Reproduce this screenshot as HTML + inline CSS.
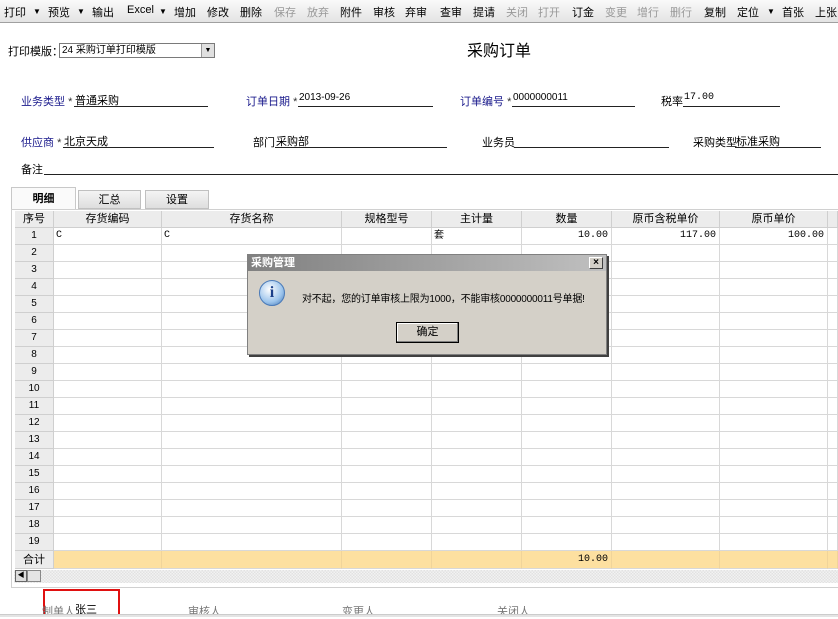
<!DOCTYPE html>
<html><head><meta charset="utf-8"><style>
*{margin:0;padding:0;box-sizing:border-box}
body{width:838px;height:617px;overflow:hidden;background:#fff;font-family:"Liberation Sans","Noto Sans CJK SC","WenQuanYi Zen Hei",sans-serif;font-size:11px;color:#000;position:relative}
.a{position:absolute;white-space:nowrap}
#tb{position:absolute;left:0;top:0;width:838px;height:23px;background:linear-gradient(#fafafa,#e4e4e4);border-bottom:1px solid #a0a0a0}
#tb span{position:absolute;top:4px;font-size:11px}
#tb .d{color:#999}
.lbl{color:#1a1a8c}
.ln{position:absolute;height:1px;background:#222}
.cell{position:absolute;border-right:1px solid #d8d8d8;border-bottom:1px solid #d8d8d8;height:17px;line-height:16px;font-size:10px;font-family:"Liberation Mono","Noto Sans CJK SC",monospace}
.hd{background:#ececec;border-right:1px solid #cfcfcf;border-bottom:1px solid #cfcfcf;text-align:center;font-family:"Liberation Sans","Noto Sans CJK SC",sans-serif;font-size:11px;font-weight:normal}
</style></head><body>
<div id="tb">
<span style="left:4px">打印</span><span style="left:33px;font-size:8px;top:7px">▼</span>
<span style="left:48px">预览</span><span style="left:77px;font-size:8px;top:7px">▼</span>
<span style="left:92px">输出</span>
<span style="left:127px">Excel</span><span style="left:159px;font-size:8px;top:7px">▼</span>
<span style="left:174px">增加</span><span style="left:207px">修改</span><span style="left:240px">删除</span>
<span style="left:274px" class="d">保存</span><span style="left:307px" class="d">放弃</span>
<span style="left:340px">附件</span><span style="left:373px">审核</span><span style="left:405px">弃审</span>
<span style="left:440px">查审</span><span style="left:473px">提请</span>
<span style="left:506px" class="d">关闭</span><span style="left:538px" class="d">打开</span>
<span style="left:572px">订金</span>
<span style="left:605px" class="d">变更</span><span style="left:637px" class="d">增行</span><span style="left:670px" class="d">删行</span>
<span style="left:704px">复制</span><span style="left:737px">定位</span><span style="left:767px;font-size:8px;top:7px">▼</span>
<span style="left:782px">首张</span><span style="left:815px">上张</span>
</div>
<div class="a" style="left:8px;top:43px">打印模版：</div>
<div class="a" style="left:59px;top:43px;width:156px;height:15px;border:1px solid #7a7a7a;font-size:10px;line-height:13px;padding-left:2px">24 采购订单打印模版
<div style="position:absolute;right:0;top:0;width:13px;height:13px;background:#e0e0e0;border-left:1px solid #999;font-size:7px;text-align:center;line-height:13px">▼</div></div>
<div class="a" style="left:467px;top:37px;font-size:16px">采购订单</div>

<div class="a lbl" style="left:21px;top:93px">业务类型 <span style="color:#333">*</span></div>
<div class="a" style="left:75px;top:92px">普通采购</div><div class="ln" style="left:74px;top:106px;width:134px"></div>
<div class="a lbl" style="left:246px;top:93px">订单日期 <span style="color:#333">*</span></div>
<div class="a" style="left:299px;top:92px;font-size:10px">2013-09-26</div><div class="ln" style="left:298px;top:106px;width:135px"></div>
<div class="a lbl" style="left:460px;top:93px">订单编号 <span style="color:#333">*</span></div>
<div class="a" style="left:513px;top:92px;font-size:10px">0000000011</div><div class="ln" style="left:512px;top:106px;width:123px"></div>
<div class="a" style="left:661px;top:93px">税率</div>
<div class="a" style="left:684px;top:92px;font-size:10px;font-family:'Liberation Mono',monospace">17.00</div><div class="ln" style="left:683px;top:106px;width:97px"></div>

<div class="a lbl" style="left:21px;top:134px">供应商 <span style="color:#333">*</span></div>
<div class="a" style="left:64px;top:133px">北京天成</div><div class="ln" style="left:63px;top:147px;width:151px"></div>
<div class="a" style="left:253px;top:134px">部门</div>
<div class="a" style="left:276px;top:133px">采购部</div><div class="ln" style="left:275px;top:147px;width:172px"></div>
<div class="a" style="left:482px;top:134px">业务员</div><div class="ln" style="left:514px;top:147px;width:155px"></div>
<div class="a" style="left:693px;top:134px">采购类型</div>
<div class="a" style="left:736px;top:133px">标准采购</div><div class="ln" style="left:735px;top:147px;width:86px"></div>
<div class="a" style="left:21px;top:161px">备注</div><div class="ln" style="left:44px;top:174px;width:794px"></div>

<div class="a" style="left:11px;top:187px;width:65px;height:23px;border:1px solid #c8c8c8;border-bottom:none;background:#fafafa;text-align:center;line-height:22px;font-weight:bold">明细</div>
<div class="a" style="left:78px;top:190px;width:63px;height:19px;border:1px solid #c0c0c0;background:linear-gradient(#f4f4f4,#dedede);text-align:center;line-height:19px">汇总</div>
<div class="a" style="left:145px;top:190px;width:64px;height:19px;border:1px solid #c0c0c0;background:linear-gradient(#f4f4f4,#dedede);text-align:center;line-height:19px">设置</div>
<div class="a" style="left:11px;top:209px;width:827px;height:379px;border:1px solid #d0d0d0;border-right:none;background:#fff"></div>
<div id="grid"></div>
<div class="a" style="left:14px;top:570px;width:824px;height:13px;background:repeating-conic-gradient(#e2e2e2 0 25%,#f2f2f2 0 50%) 0 0/3px 3px"></div>
<div class="a" style="left:15px;top:570px;width:12px;height:12px;background:#ddd;border:1px solid #666;font-size:7px;line-height:10px;text-align:center">◀</div>
<div class="a" style="left:27px;top:570px;width:14px;height:12px;background:#e4e4e4;border:1px solid #888"></div>

<div class="a" style="left:43px;top:589px;width:77px;height:28px;border:2px solid #e01010;border-bottom:none"></div>
<div class="a" style="left:42px;top:603px;color:#777">制单人</div>
<div class="a" style="left:75px;top:601px">张三</div>
<div class="a" style="left:188px;top:603px;color:#777">审核人</div>
<div class="a" style="left:342px;top:603px;color:#777">变更人</div>
<div class="a" style="left:497px;top:603px;color:#777">关闭人</div>
<div class="a" style="left:0;top:614px;width:838px;height:3px;background:#e4e4e4;border-top:1px solid #ccc"></div>

<div class="a" style="left:247px;top:254px;width:360px;height:101px;background:#d4d0c8;border:1px solid #808080;box-shadow:2px 2px 0 #404040">
<div style="height:16px;background:linear-gradient(90deg,#808080,#c0c0c0);color:#fff;font-size:11px;line-height:16px;padding-left:3px;font-weight:bold">采购管理
<div style="position:absolute;right:3px;top:2px;width:14px;height:12px;background:#d4d0c8;border:1px solid #404040;border-top-color:#fff;border-left-color:#fff;color:#000;font-size:10px;line-height:10px;text-align:center">×</div></div>
<div style="position:absolute;left:11px;top:25px;width:26px;height:26px;border-radius:50%;background:radial-gradient(circle at 40% 35%,#fff,#9cc4ec 60%,#3a6fb0);border:1px solid #4a7ab8;color:#1a3f8a;font:bold 16px 'Liberation Serif',serif;text-align:center;line-height:24px">i</div>
<div style="position:absolute;left:54px;top:35px;font-size:10px;white-space:nowrap;letter-spacing:-0.2px">对不起，您的订单审核上限为1000，不能审核0000000011号单据!</div>
<div style="position:absolute;left:148px;top:67px;width:63px;height:21px;border:1px solid #000;box-shadow:inset -1px -1px #808080,inset 1px 1px #fff;text-align:center;line-height:19px">确定</div>
</div>
<script>
var cols=[15,54,162,342,432,522,612,720,828,838];
var h=["序号","存货编码","存货名称","规格型号","主计量","数量","原币含税单价","原币单价",""];
var g="";
function c(i,y,t,st,cls){g+='<div class="cell '+(cls||'')+'" style="left:'+cols[i]+'px;top:'+y+'px;width:'+(cols[i+1]-cols[i])+'px;'+(st||'')+'">'+t+'</div>';}
for(var i=0;i<9;i++)c(i,211,h[i],'','hd');
for(var r=1;r<=19;r++){var y=228+(r-1)*17;
 for(var i=0;i<9;i++){var t='',st='';
  if(i==0){c(0,y,r,'font-size:10px','hd');continue}
  if(r==1){if(i==1||i==2)t='C';if(i==4){t='套';st='font-family:Liberation Sans,Noto Sans CJK SC,sans-serif;'}
   if(i==5)t='10.00';if(i==6)t='117.00';if(i==7)t='100.00';}
  if(i>=5)st+='text-align:right;padding-right:3px';else st+='padding-left:2px';
  c(i,y,t,st);}}
var y=551;c(0,y,'合计','height:18px;line-height:18px','hd');
for(var i=1;i<9;i++)c(i,y,i==5?'10.00':'','background:#fde0a0;height:18px;line-height:18px;text-align:right;padding-right:3px;border-right-color:#f0d49a');
document.getElementById('grid').innerHTML=g;
</script>
</body></html>
